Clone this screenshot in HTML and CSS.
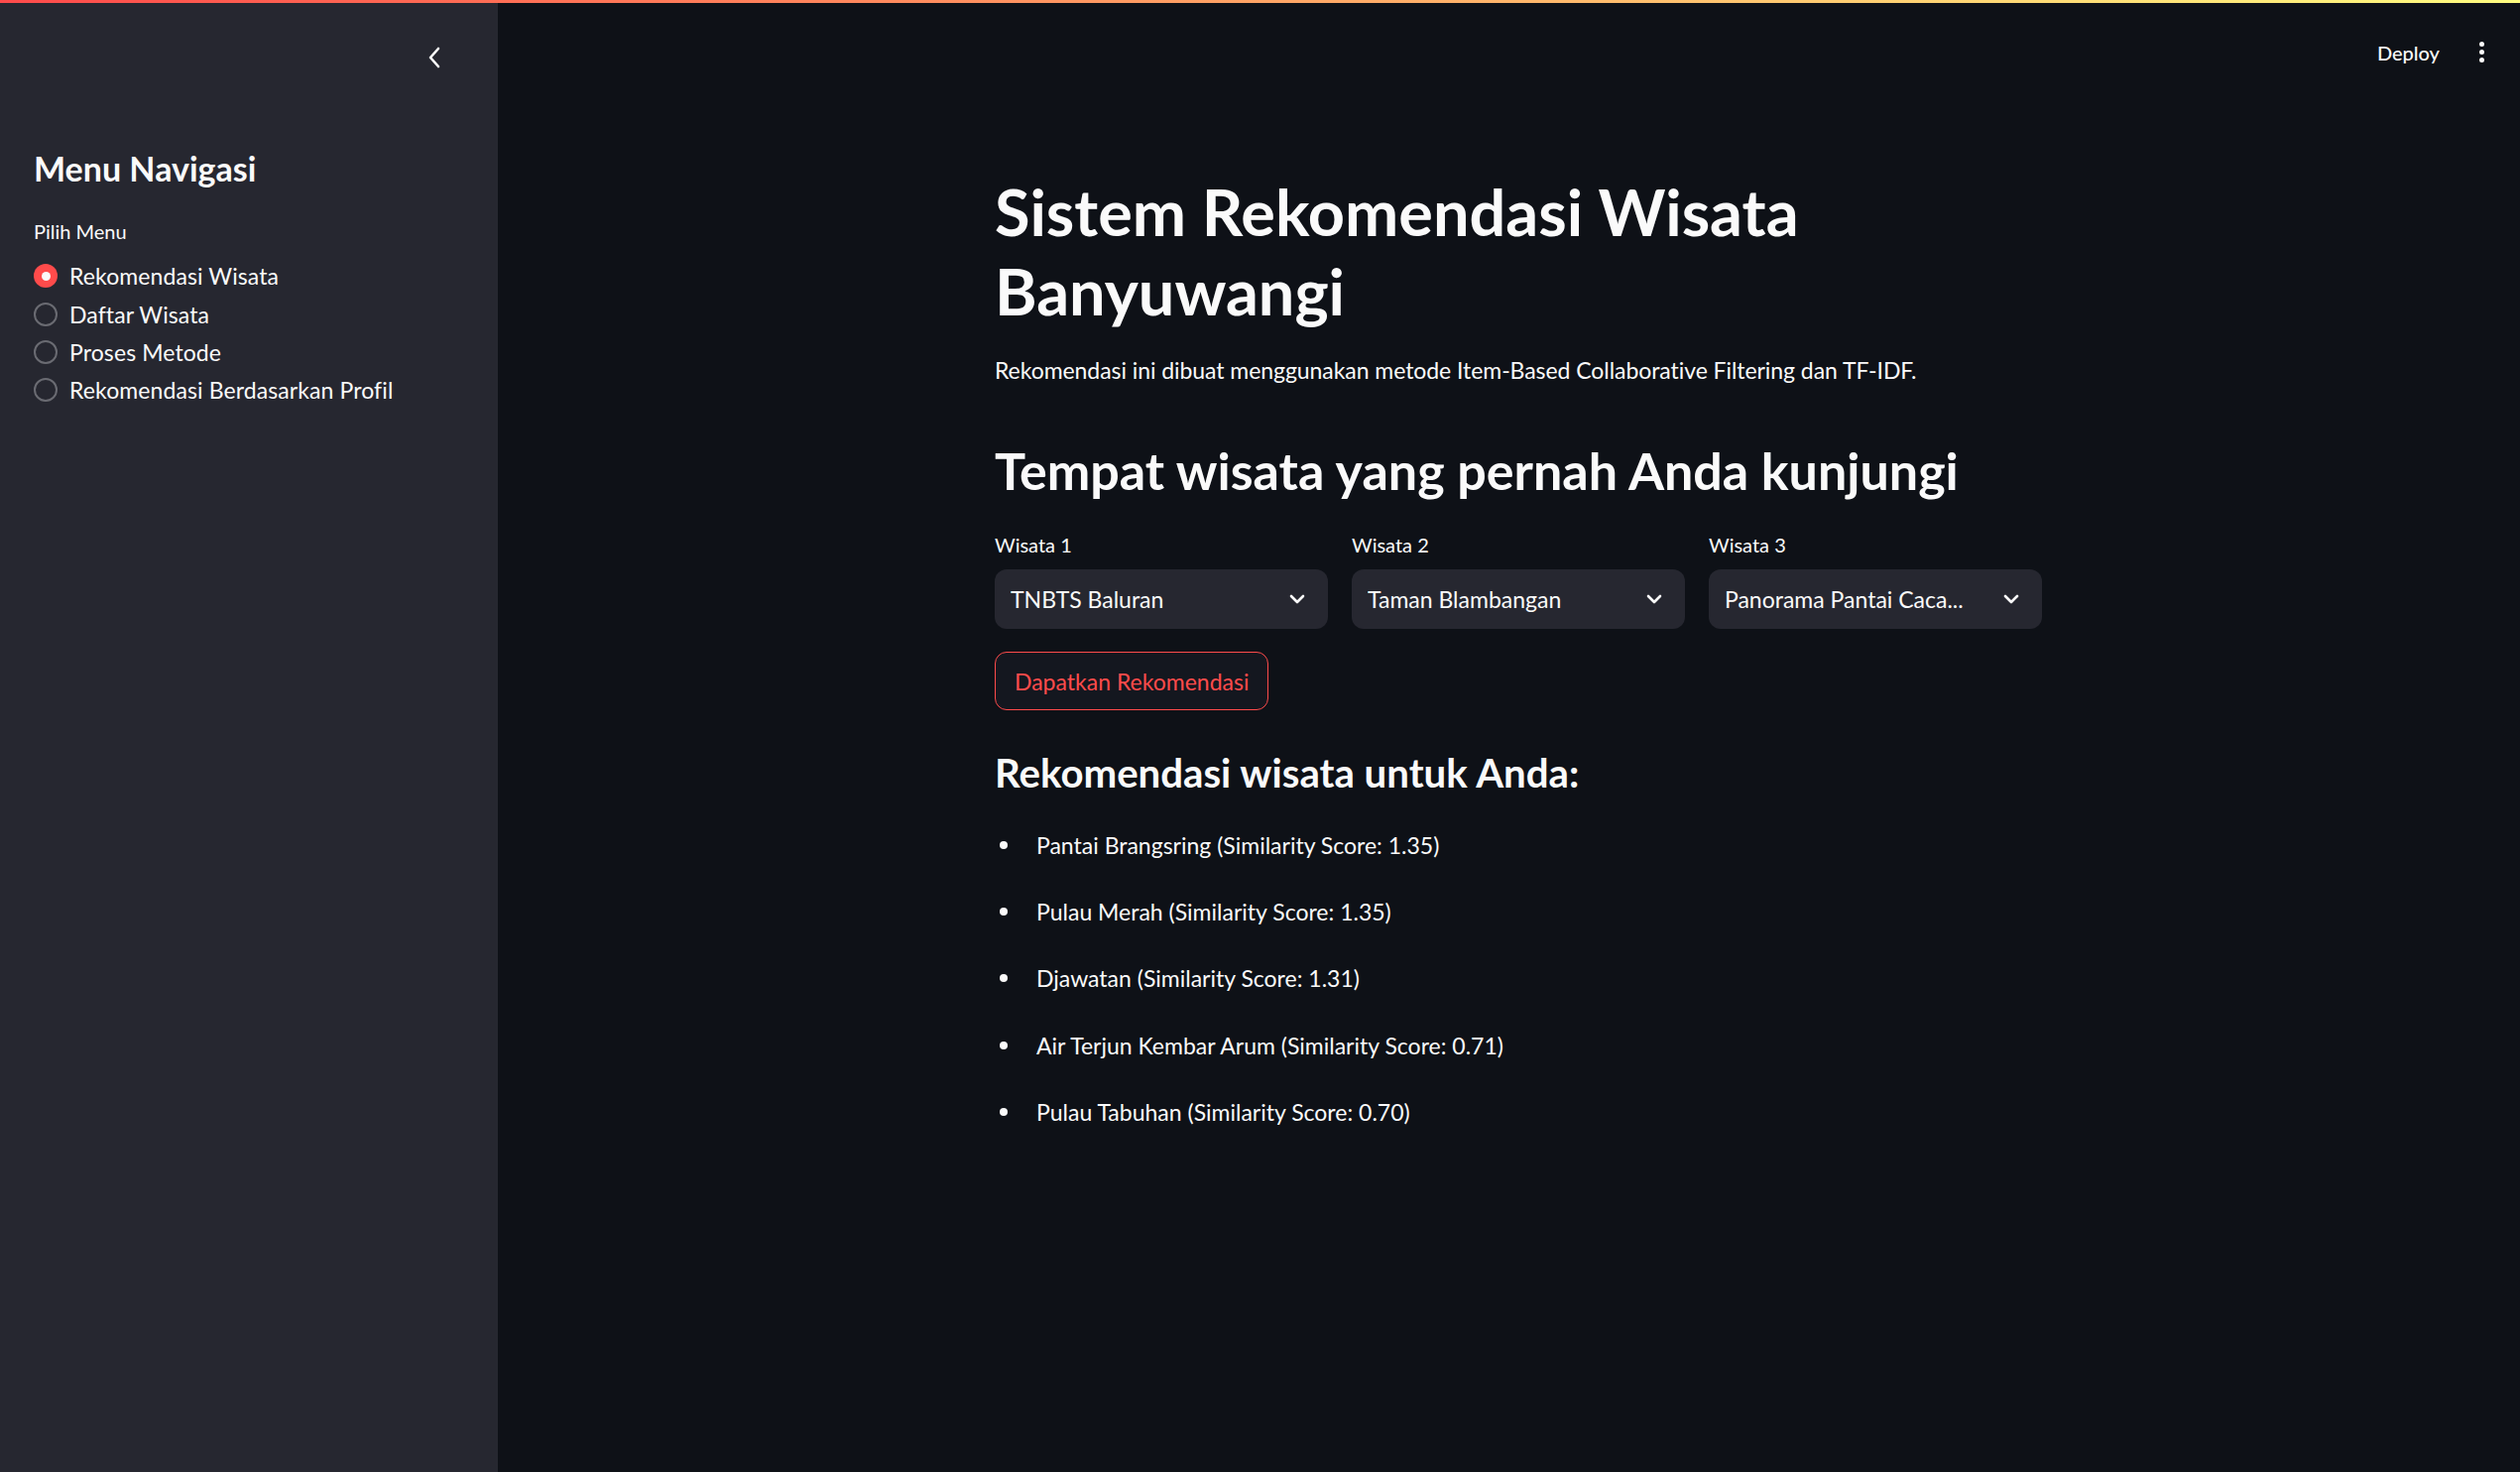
FILE: index.html
```html
<!DOCTYPE html>
<html lang="id">
<head>
<meta charset="utf-8">
<title>Sistem Rekomendasi Wisata Banyuwangi</title>
<link rel="stylesheet" href="styles.css">
</head>
<body>
<div class="decoration"></div>
<div class="app">
  <aside class="sidebar">
    <div class="sidebar-header">
      <svg class="collapse" width="14" height="22" viewBox="0 0 14 22"><path d="M11 2 L3 11 L11 20" fill="none" stroke="#fafafa" stroke-width="2.6" stroke-linecap="round" stroke-linejoin="round"/></svg>
    </div>
    <div class="sidebar-content">
      <h2 class="side-title">Menu Navigasi</h2>
      <div class="widget-label">Pilih Menu</div>
      <div class="radio-group">
        <div class="radio-row"><span class="radio checked"></span><span class="radio-text">Rekomendasi Wisata</span></div>
        <div class="radio-row"><span class="radio"></span><span class="radio-text">Daftar Wisata</span></div>
        <div class="radio-row"><span class="radio"></span><span class="radio-text">Proses Metode</span></div>
        <div class="radio-row"><span class="radio"></span><span class="radio-text">Rekomendasi Berdasarkan Profil</span></div>
      </div>
    </div>
  </aside>
  <main class="main">
    <header class="toolbar">
      <span class="deploy">Deploy</span>
      <span class="kebab"><i></i><i></i><i></i></span>
    </header>
    <div class="block">
      <h1 class="title">Sistem Rekomendasi Wisata Banyuwangi</h1>
      <p class="desc">Rekomendasi ini dibuat menggunakan metode Item-Based Collaborative Filtering dan TF-IDF.</p>
      <h2 class="subtitle">Tempat wisata yang pernah Anda kunjungi</h2>
      <div class="selects">
        <div class="field">
          <div class="widget-label">Wisata 1</div>
          <div class="select"><span class="select-value">TNBTS Baluran</span><svg class="chev" width="16" height="10" viewBox="0 0 16 10"><path d="M2 2 L8 8 L14 2" fill="none" stroke="#fafafa" stroke-width="2.6" stroke-linecap="round" stroke-linejoin="round"/></svg></div>
        </div>
        <div class="field">
          <div class="widget-label">Wisata 2</div>
          <div class="select"><span class="select-value">Taman Blambangan</span><svg class="chev" width="16" height="10" viewBox="0 0 16 10"><path d="M2 2 L8 8 L14 2" fill="none" stroke="#fafafa" stroke-width="2.6" stroke-linecap="round" stroke-linejoin="round"/></svg></div>
        </div>
        <div class="field">
          <div class="widget-label">Wisata 3</div>
          <div class="select"><span class="select-value">Panorama Pantai Caca...</span><svg class="chev" width="16" height="10" viewBox="0 0 16 10"><path d="M2 2 L8 8 L14 2" fill="none" stroke="#fafafa" stroke-width="2.6" stroke-linecap="round" stroke-linejoin="round"/></svg></div>
        </div>
      </div>
      <button class="btn">Dapatkan Rekomendasi</button>
      <h3 class="result-title">Rekomendasi wisata untuk Anda:</h3>
      <ul class="results">
        <li>Pantai Brangsring (Similarity Score: 1.35)</li>
        <li>Pulau Merah (Similarity Score: 1.35)</li>
        <li>Djawatan (Similarity Score: 1.31)</li>
        <li>Air Terjun Kembar Arum (Similarity Score: 0.71)</li>
        <li>Pulau Tabuhan (Similarity Score: 0.70)</li>
      </ul>
    </div>
  </main>
</div>
</body>
</html>
```
FILE: styles.css
```css
html, body {
  margin: 0;
  padding: 0;
  height: 100%;
}
body {
  background: #0e1117;
  color: #fafafa;
  font-family: "Source Sans Pro", Lato, "Noto Sans", sans-serif;
  overflow: hidden;
}
.decoration {
  position: fixed;
  top: 0;
  left: 0;
  right: 0;
  height: 3px;
  background: linear-gradient(90deg, #ff4b4b, #fffd80);
  z-index: 10;
}
.app {
  display: flex;
  height: 1484px;
}
.sidebar {
  width: 502px;
  flex: 0 0 502px;
  background: #262730;
  box-sizing: border-box;
}
.sidebar-header {
  height: 116px;
  display: flex;
  align-items: center;
  justify-content: flex-end;
  padding-right: 57px;
}
.collapse {
  display: block;
}
.sidebar-content {
  padding-left: 34px;
  padding-top: 32px;
}
.side-title {
  margin: 0;
  font-size: 34px;
  line-height: 44px;
  font-weight: 700;
}
.widget-label {
  font-size: 20px;
  line-height: 28px;
}
.sidebar-content .widget-label {
  margin-top: 27px;
}
.radio-group {
  margin-top: 12px;
  display: flex;
  flex-direction: column;
}
.radio-row {
  height: 38.4px;
  display: flex;
  align-items: center;
  gap: 12px;
}
.radio {
  width: 24px;
  height: 24px;
  box-sizing: border-box;
  border-radius: 50%;
  border: 2px solid #6a6b72;
  flex: 0 0 24px;
  display: flex;
  align-items: center;
  justify-content: center;
}
.radio.checked {
  border: none;
  background: #ff4b4b;
}
.radio.checked::after {
  content: "";
  width: 9px;
  height: 9px;
  border-radius: 50%;
  background: #fafafa;
}
.radio-text {
  font-size: 23px;
  letter-spacing: 0.1px;
}
.main {
  flex: 1;
  display: flex;
  flex-direction: column;
}
.toolbar {
  height: 106px;
  display: flex;
  align-items: center;
  justify-content: flex-end;
  padding-right: 36px;
  gap: 40px;
}
.deploy {
  font-size: 20px;
  font-weight: 500;
}
.kebab {
  display: flex;
  flex-direction: column;
  gap: 3px;
  padding-bottom: 2px;
}
.kebab i {
  display: block;
  width: 5px;
  height: 5px;
  border-radius: 50%;
  background: #fafafa;
}
.block {
  margin-top: 67px;
  margin-left: 501px;
  width: 1056px;
}
.title {
  margin: 0;
  font-size: 64.8px;
  line-height: 80px;
  font-weight: 700;
  width: 870px;
}
.desc {
  margin: 22px 0 0;
  font-size: 23px;
  line-height: 36px;
  letter-spacing: -0.06px;
}
.subtitle {
  margin: 51px 0 0;
  font-size: 52px;
  line-height: 64px;
  font-weight: 700;
}
.selects {
  margin-top: 29px;
  display: grid;
  grid-template-columns: repeat(3, 1fr);
  gap: 24px;
}
.field .widget-label {
  margin-bottom: 11px;
}
.select {
  height: 60px;
  border-radius: 12px;
  background: #262730;
  display: flex;
  align-items: center;
  justify-content: space-between;
  padding: 0 23px 0 16px;
}
.select-value {
  font-size: 23px;
  white-space: nowrap;
  overflow: hidden;
}
.chev {
  display: block;
  flex: 0 0 16px;
}
.btn {
  display: block;
  margin-top: 23px;
  height: 59px;
  padding: 0 19px;
  border: 1.5px solid #ff4b4b;
  border-radius: 12px;
  background: #14171f;
  color: #ff4b4b;
  font-family: inherit;
  font-size: 23px;
}
.result-title {
  margin: 37px 0 0;
  font-size: 40.2px;
  line-height: 52px;
  font-weight: 700;
}
.results {
  list-style: none;
  margin: 29px 0 0;
  padding: 0;
}
.results li {
  font-size: 23px;
  line-height: 36px;
  margin-bottom: 31.2px;
  padding-left: 42px;
  position: relative;
}
.results li::before {
  content: "";
  position: absolute;
  left: 5px;
  top: 14px;
  width: 8px;
  height: 8px;
  border-radius: 50%;
  background: #fafafa;
}
```
